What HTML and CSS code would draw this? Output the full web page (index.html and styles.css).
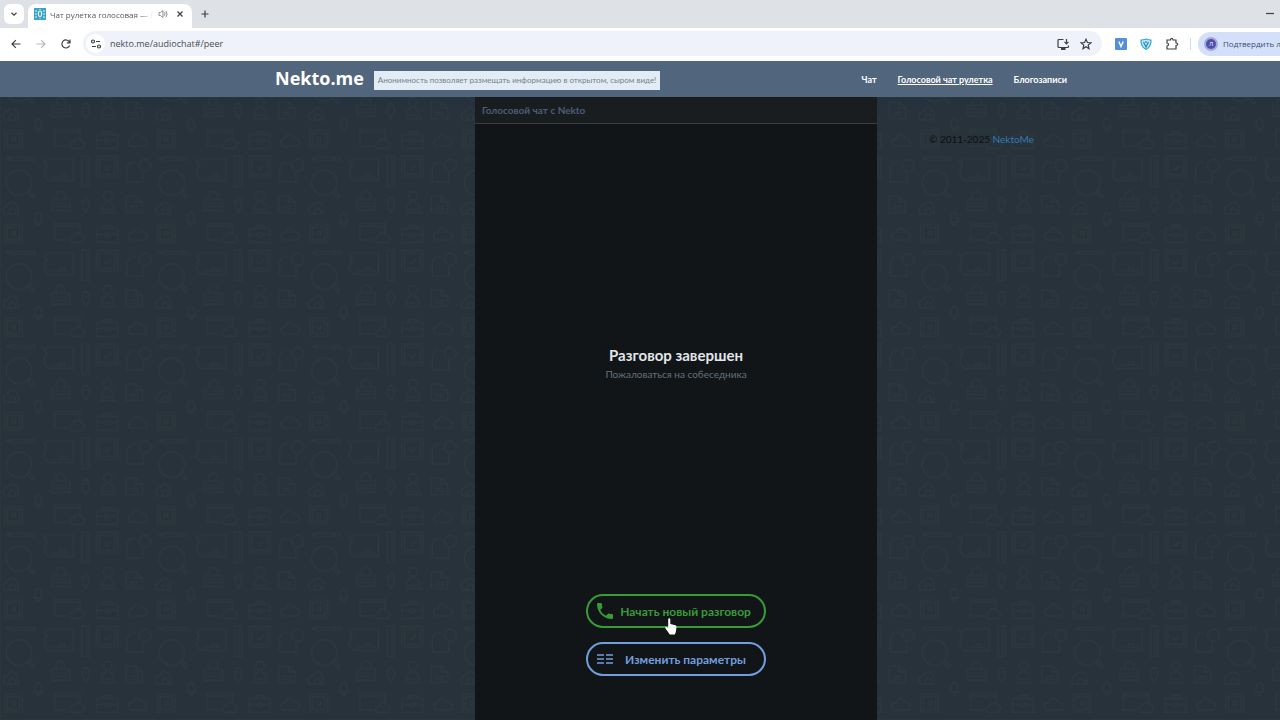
FILE: index.html
```html
<!DOCTYPE html>
<html lang="ru">
<head>
    <meta charset="UTF-8">
    <meta name="viewport" content="width=device-width, initial-scale=1.0">
    <title>Чат рулетка голосовая</title>
    <link rel="stylesheet" href="styles.css">
</head>
<body>
    <div class="window">
        <div class="tab-strip">
            <button class="tab-search" aria-label="Поиск вкладок">
                <svg width="8" height="8" viewBox="0 0 8 8"><path d="M1.5 2.8 4 5.2l2.500-2.400" /></svg>
            </button>
            <div class="tab">
                <svg class="favicon" width="12" height="12" viewBox="0 0 12 12">
                    <rect width="12" height="12" fill="#3ba3c4" stroke="none" />
                    <path d="M2 2v8M10 2v8M6 1v1M6 10v1" stroke="#b9e5f2" stroke-dasharray="2 1" />
                    <rect x="4.500" y="3" width="3" height="5.500" rx="1.500" fill="none" stroke="#e3f6fb" />
                </svg>
                <span class="tab-title">Чат рулетка голосовая — Г</span>
                <svg class="sound" width="10" height="10" viewBox="0 0 10 10"><path d="M1 3.500h1.500L5 1.500v7L2.500 6.500H1zM6.500 3.300q1.200 1.700 0 3.400M8 2q2.200 3 0 6" /></svg>
                <button class="tab-close" aria-label="Закрыть вкладку">
                    <svg width="8" height="8" viewBox="0 0 8 8"><path d="M1.500 1.500l5 5M6.500 1.500l-5 5" /></svg>
                </button>
            </div>
            <button class="new-tab" aria-label="Новая вкладка">
                <svg width="10" height="10" viewBox="0 0 10 10"><path d="M5 1.500v7M1.500 5h7" /></svg>
            </button>
            <button class="minimize" aria-label="Свернуть"><svg width="8" height="8" viewBox="0 0 8 8"><path d="M0 3.500h8" /></svg></button>
        </div>

        <div class="toolbar">
            <button aria-label="Назад"><svg width="12" height="12" viewBox="0 0 12 12"><path d="M10.500 6h-8.500M5.800 2.200 2 6l3.800 3.800" /></svg></button>
            <button class="off" aria-label="Вперёд" disabled><svg width="12" height="12" viewBox="0 0 12 12"><path d="M1.500 6h8.500M6.200 2.200 10 6l-3.800 3.800" /></svg></button>
            <button aria-label="Обновить"><svg width="12" height="12" viewBox="0 0 12 12"><path d="M9.600 7.500a4 4 0 1 1-.4-3.800L10 4.800M10 1.500v3.300H6.900" /></svg></button>
            <div class="omnibox">
                <button class="site-info" aria-label="Сведения о сайте">
                    <svg width="12" height="12" viewBox="0 0 12 12"><circle cx="3" cy="3.500" r="1.500" /><path d="M6 3.500h4M2 8.500h4" /><circle cx="9" cy="8.500" r="1.500" /></svg>
                </button>
                <input type="text" aria-label="Адресная строка" value="nekto.me/audiochat#/peer">
                <button aria-label="Установить"><svg width="14" height="12" viewBox="0 0 14 12"><path d="M7.500 1.500H3A1 1 0 0 0 2 2.500v6a1 1 0 0 0 1 1h8.500a1 1 0 0 0 1-1V7.500M10.500 1v4.500M8.500 3.800l2 2 2-2" /><path d="M5 11h4.500" stroke-width="2" /></svg></button>
                <button aria-label="В закладки"><svg width="12" height="12" viewBox="0 0 12 12"><path d="M6 1.200 7.400 4.500l3.500.3-2.700 2.300.8 3.500-3-1.900-3 1.900.8-3.500L1.100 4.800l3.500-.3z" /></svg></button>
            </div>
            <div class="extensions">
                <button aria-label="Расширение V"><svg width="12" height="12" viewBox="0 0 12 12"><rect x="0" y="0" width="12" height="12" rx="1" fill="#5490d9" stroke="none" /><path d="M3.800 3.500 6 8.500l2.200-5" stroke="#fff" stroke-width="1.400" /></svg></button>
                <button aria-label="Защита"><svg width="12" height="12" viewBox="0 0 12 12"><path d="M1 2q2.500 0 5-1 2.500 1 5 1 .3 6.500-5 9.500Q.7 8.500 1 2z" fill="#bfe8f5" stroke="#36a5cb" /><path d="M3.500 4 6 9l2.500-5M6 3v2" stroke="#268db5" stroke-width="1.300" /></svg></button>
                <button aria-label="Расширения"><svg width="14" height="12" viewBox="0 0 14 12"><path d="M2 2h3.500q0-1.500 1.200-1.500T8 2h3v3q1.700 0 1.700 1.200T11 7.500V11H2V8q1.500 0 1.500-1.500T2 5z" /></svg></button>
            </div>
            <button class="profile"><span class="avatar">Л</span>Подтвердить личность</button>
        </div>

        <header class="site-header">
            <div class="container header-row">
                <a class="logo" href="#">Nekto.me</a>
                <span class="slogan">Анонимность позволяет размещать информацию в открытом, сыром виде!</span>
                <nav>
                    <a href="#">Чат</a>
                    <a class="active" href="#">Голосовой чат рулетка</a>
                    <a href="#">Блогозаписи</a>
                </nav>
            </div>
        </header>

        <main>
            <!-- Background doodles -->
            <svg class="doodles" aria-hidden="true">
                <defs>
                    <pattern id="icons" y="190" width="458" height="282" patternUnits="userSpaceOnUse" patternTransform="translate(0 -7) scale(.3333)">
                        <g fill="none" stroke-width="3" transform="translate(0 -190)">
                            <path d="M20 206l14-4h70v9H34zM88 202v9" />
                            <circle cx="57" cy="278" r="38" /><path d="M83 306l14 19 7-7-15-17" />
                            <path d="M142 207h78v65h-76l-12-18 8-47M152 262h58M180 262v-10h14v10M128 207l14 26" />
                            <path d="M246 198h22v92h-22zM260 205v78" />
                            <path d="M290 200h63v62h-63zM298 208h47v46h-47zM312 232l8 8 14-14" />
                            <path d="M408 217h-17l-10 16v43h49v-29" /><circle cx="435" cy="226" r="18" />
                            <path d="M12 372q-8-24 12-26 4-14 20-8 14 8 10 34zM30 372q-6-16 6-18 12 0 10 18" />
                            <path d="M155 328h55v34h-55zM160 340h45M160 350h45M168 328v-14q14-20 28 0v14" />
                            <path d="M257 368q-22-36 0-46 22 10 0 46M251 336h12" />
                            <circle cx="323" cy="318" r="13" /><path d="M299 368h51M304 358q0-18 13-20v-9M342 358q0-18-13-20v-9M304 358h38" />
                            <path d="M378 318h30l19 18v32h-49zM408 318v18h19M388 350h28M388 358h28" />
                            <path d="M102 396q4-2 4-20 9-18 18 0 0 18 6 20zM111 398v8h8v-8" />
                            <path d="M14 403h53v54H14zM22 411h37v38H22zM36 424h10v12H36z" />
                            <path d="M204 450h-40v-50h76v32M164 408h76M214 458q-10-17 7-20 8-20 22-3 19 2 5 23z" />
                            <path d="M290 416h63v42h-63zM310 416v-9h25v9M290 434h23M330 434h23M315 430h13v10h-13z" />
                            <path d="M390 450q-14-19 9-23 12-25 25-2 24 5 14 25z" />
                        </g>
                    </pattern>
                </defs>
                <rect width="100%" height="100%" fill="url(#icons)" />
            </svg>

            <div class="container columns">
                <section class="chat">
                    <h1>Голосовой чат с Nekto</h1>
                    <div class="status">
                        <h2>Разговор завершен</h2>
                        <a href="#">Пожаловаться на собеседника</a>
                    </div>
                    <div class="actions">
                        <button class="call">
                            <svg width="16" height="16" viewBox="3 3 18 18"><path d="M6.620 10.790c1.440 2.830 3.760 5.140 6.590 6.590l2.200-2.200c.27-.27.67-.36 1.020-.24 1.120.37 2.330.57 3.570.57.55 0 1 .45 1 1V20c0 .55-.45 1-1 1-9.390 0-17-7.610-17-17 0-.55.45-1 1-1h3.500c.55 0 1 .45 1 1 0 1.250.2 2.450.57 3.570.11.35.03.74-.25 1.020z" /></svg>
                            <span>Начать новый разговор</span>
                        </button>
                        <button class="settings">
                            <svg width="16" height="16" viewBox="0 0 16 16"><path d="M0 4h7M9 4h7M0 8h7M9 8h7M0 12h7M9 12h7" /></svg>
                            <span>Изменить параметры</span>
                        </button>
                        <svg class="pointer" width="12" height="17" viewBox="0 0 12 17"><path d="M3.200 1.500Q3.200.2 4.200.2T5.300 1.500V6l5 1.300q1.400.4 1.200 1.800l-.7 5-1 2.400H4.800L.5 10.500q-.6-1.200.4-1.700.8-.3 1.400.5l.9 1z" /></svg>
                    </div>
                </section>
                <footer>© 2011-2025 <a href="#">NektoMe</a></footer>
            </div>
        </main>
    </div>
</body>
</html>
```

FILE: styles.css
```css
* {
    box-sizing: border-box;
}

body {
    margin: 0;
    overflow: hidden;
    font-family: Lato, Roboto, sans-serif;
    background: #28323b;
}

button, input {
    font: inherit;
    border: none;
    background: none;
    padding: 0;
}

button {
    display: flex;
    align-items: center;
    justify-content: center;
    cursor: pointer;
}

a {
    color: inherit;
    text-decoration: none;
}

/* The window is a bit wider than the screen and runs off its right edge */
.window {
    display: flex;
    flex-direction: column;
    width: calc(100% + 72px);
    height: 100vh;
}

/* Browser */
.tab-strip, .toolbar {
    display: flex;
    align-items: center;
    flex-shrink: 0;
    font-family: "Open Sans", "Noto Sans", sans-serif;
    color: #55585d;
}

.tab-strip svg, .toolbar svg {
    fill: none;
    stroke: #3c4045;
    stroke-width: 1.2;
}

.tab-strip {
    height: 28px;
    padding: 0 78px 0 4px;
    background: #dee1e6;
}

.tab-search {
    width: 20px;
    height: 20px;
    border-radius: 6px;
    background: #fff;
}

.tab {
    display: flex;
    align-items: center;
    align-self: flex-end;
    width: 164px;
    height: 24px;
    margin-left: 4px;
    padding: 0 6px 4px;
    border-radius: 8px 8px 0 0;
    background: #fff;
}

.tab-title {
    flex: 1;
    margin: 0 5px 0 4px;
    overflow: hidden;
    white-space: nowrap;
    font-size: 8px;
    -webkit-mask-image: linear-gradient(to right, #000 88%, transparent);
    mask-image: linear-gradient(to right, #000 88%, transparent);
}

.tab-strip .sound {
    stroke: #8b8e92;
    stroke-width: 1;
}

.tab-close {
    margin: 0 2px 0 8px;
}

.new-tab {
    margin-left: 8px;
}

.minimize {
    margin-left: auto;
}

.toolbar {
    height: 33px;
    padding: 0 0 2px 10px;
    gap: 13px;
    background: #fff;
}

.toolbar .off svg {
    stroke: #b5b8bc;
}

.omnibox {
    display: flex;
    align-items: center;
    flex: 1;
    gap: 10px;
    height: 25px;
    margin-left: -2px;
    padding: 0 10px 0 3px;
    border-radius: 13px;
    background: #eff2fa;
}

.site-info {
    width: 19px;
    height: 19px;
    border-radius: 50%;
    background: #fff;
}

.omnibox input {
    flex: 1;
    margin-left: -5px;
    font-size: 9px;
    color: #494c52;
}

.extensions {
    display: flex;
    gap: 13px;
    padding-right: 11px;
    border-right: 1px solid #d3dcec;
}

.profile {
    gap: 5px;
    width: 154px;
    height: 24px;
    margin-left: -6px;
    padding-left: 6px;
    justify-content: flex-start;
    border-radius: 12px 0 0 12px;
    background: #d4e0fa;
    font-size: 8px;
    color: #3f4e74;
    white-space: nowrap;
}

.avatar {
    width: 14px;
    height: 14px;
    border: 2px solid #a5a9dc;
    border-radius: 50%;
    background: #4d50ab;
    color: #fff;
    font-size: 6px;
    line-height: 10px;
    text-align: center;
}

/* Site */
.container {
    width: 802px;
    margin: 0 auto;
}

.site-header {
    flex-shrink: 0;
    background: #51657d;
    color: #fff;
}

.header-row {
    display: flex;
    align-items: center;
    height: 36px;
}

.logo {
    padding-bottom: 2px;
    font-family: "Open Sans", "Noto Sans", sans-serif;
    font-size: 18px;
    font-weight: 700;
}

.slogan {
    margin: 2px 0 0 10px;
    padding: 0 4px;
    line-height: 19px;
    font-size: 8px;
    white-space: nowrap;
    background: #e1ecf5;
    color: #75818d;
}

nav {
    display: flex;
    gap: 21px;
    margin-left: auto;
    padding-right: 10px;
    font-size: 9px;
    font-weight: 700;
    white-space: nowrap;
}

nav .active {
    text-decoration: underline;
}

main {
    position: relative;
    display: flex;
    flex: 1;
    min-height: 0;
    background: linear-gradient(#25313d, #28323b 16px);
}

.doodles {
    position: absolute;
    top: 0;
    left: 0;
    width: 100%;
    height: 100%;
    stroke: #2c3a3e;
}

.columns {
    position: relative;
    display: grid;
    grid-template-columns: 200px 402px 200px;
}

.chat {
    grid-column: 2;
    display: flex;
    flex-direction: column;
    background: #111518;
}

.chat h1 {
    margin: 0;
    padding: 0 7px;
    line-height: 26px;
    font-size: 10px;
    font-weight: 700;
    border-bottom: 1px solid #3a3e40;
    background: #1a1d1f;
    color: #4d5c78;
}

.status {
    display: flex;
    flex: 1;
    flex-direction: column;
    align-items: center;
    justify-content: center;
    padding-top: 10px;
}

.status h2 {
    margin: 0;
    font-size: 15px;
    line-height: 20px;
    color: #e2e6e9;
}

.status a {
    font-size: 10px;
    line-height: 18px;
    color: #66717a;
}

.actions {
    position: relative;
    display: flex;
    flex-direction: column;
    align-items: center;
    gap: 14px;
    padding-bottom: 44px;
}

.actions button {
    width: 180px;
    height: 34px;
    padding: 0 10px 0 9px;
    border: 2px solid;
    border-radius: 17px;
    font-size: 12px;
    font-weight: 700;
}

.actions button span {
    flex: 1;
    padding-left: 4px;
    white-space: nowrap;
}

.call {
    color: #389b38;
}

.call svg {
    fill: currentColor;
}

.settings {
    color: #719fde;
}

.settings svg {
    fill: none;
    stroke: currentColor;
    stroke-width: 1.5;
}

.pointer {
    position: absolute;
    top: 24px;
    left: 190px;
    fill: #fff;
}

footer {
    padding: 33px 0 0 52px;
    font-size: 10px;
    line-height: 18px;
    color: #0c0f13;
}

footer a {
    color: #337ab7;
}
```
